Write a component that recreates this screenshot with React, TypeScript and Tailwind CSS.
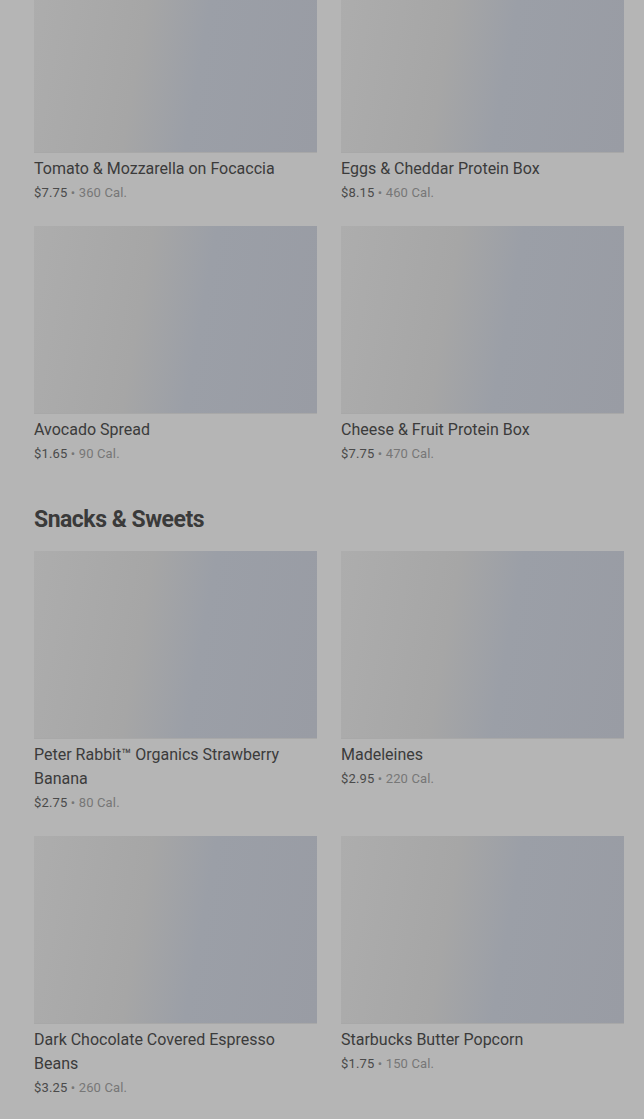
import React from 'react'

type Item = { name: string; price: string; cal: string }

const topItems: Item[] = [
  { name: 'Tomato & Mozzarella on Focaccia', price: '$7.75', cal: '360 Cal.' },
  { name: 'Eggs & Cheddar Protein Box', price: '$8.15', cal: '460 Cal.' },
  { name: 'Avocado Spread', price: '$1.65', cal: '90 Cal.' },
  { name: 'Cheese & Fruit Protein Box', price: '$7.75', cal: '470 Cal.' },
]

const snacks: Item[] = [
  { name: 'Peter Rabbit™ Organics Strawberry Banana', price: '$2.75', cal: '80 Cal.' },
  { name: 'Madeleines', price: '$2.95', cal: '220 Cal.' },
  { name: 'Dark Chocolate Covered Espresso Beans', price: '$3.25', cal: '260 Cal.' },
  { name: 'Starbucks Butter Popcorn', price: '$1.75', cal: '150 Cal.' },
]

const Card = ({ item }: { item: Item }) => (
  <div className="flex flex-col">
    <div className="h-[188px] w-full bg-[linear-gradient(100deg,#adadad_0%,#a6a6a6_38%,#9b9fa7_58%,#999ca4_100%)] border-b border-[#a8a8a8]" />
    <p className="mt-1 text-[16px] leading-6 text-[#3b3b3b]">{item.name}</p>
    <p className="mt-[2px] text-[13px] leading-5 tracking-[0.15px]">
      <span className="text-[#4a4a4a]">{item.price}</span>
      <span className="text-[#777777]"> • {item.cal}</span>
    </p>
  </div>
)

export default function App() {
  return (
    <div className="h-[1119px] overflow-hidden bg-[#b5b5b5] font-['Roboto',sans-serif]">
      <div className="pl-[34px] pr-[20px] -mt-[35px]">
        <div className="grid grid-cols-2 gap-x-6 gap-y-[23px]">
          {topItems.map((it) => (
            <Card key={it.name} item={it} />
          ))}
        </div>

        <section className="mt-[40px]">
          <h2 className="text-[23px] leading-8 font-bold tracking-[-0.5px] text-[#3a3a3a] mb-[15px]">
            Snacks &amp; Sweets
          </h2>
          <div className="grid grid-cols-2 gap-x-6 gap-y-[23px]">
            {snacks.map((it) => (
              <Card key={it.name} item={it} />
            ))}
          </div>
        </section>
      </div>
    </div>
  )
}
